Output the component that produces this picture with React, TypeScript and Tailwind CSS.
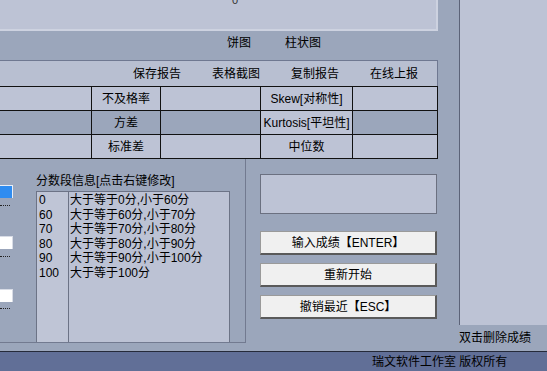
import React from 'react';

const font = { fontFamily: '"Liberation Sans", "Noto Sans CJK SC", sans-serif' };

const rows = [
  { cells: ['', '不及格率', '', 'Skew[对称性]', ''], dark: [false, false, false, false, false] },
  { cells: ['', '方差', '', 'Kurtosis[平坦性]', ''], dark: [true, true, true, false, true] },
  { cells: ['', '标准差', '', '中位数', ''], dark: [false, false, false, false, false] },
];

const ranges = [
  ['0', '大于等于0分,小于60分'],
  ['60', '大于等于60分,小于70分'],
  ['70', '大于等于70分,小于80分'],
  ['80', '大于等于80分,小于90分'],
  ['90', '大于等于90分,小于100分'],
  ['100', '大于等于100分'],
];

function Btn({ children }: { children: React.ReactNode }) {
  return (
    <button className="w-[177px] h-[24px] bg-[#f0f0f0] border border-[#9a9a9a] border-r-2 border-b-2 border-r-[#5a5a5a] border-b-[#5a5a5a] text-[12px] text-black flex items-center justify-center leading-none">
      {children}
    </button>
  );
}

export default function App() {
  return (
    <div
      className="w-[547px] h-[371px] flex flex-col bg-[#9ba6bb] overflow-hidden text-[12px] text-black"
      style={font}
    >
      <div className="flex h-[351px]">
        {/* left area */}
        <div className="w-[459px] flex flex-col">
          <div className="relative h-[31px] w-[438px] bg-[#bdc3d5] border-r-2 border-b-2 border-[#cdd2e0]">
            <span className="absolute left-[232px] top-[-6px] text-[11px] leading-[12px] text-[#333]">0</span>
          </div>

          <div className="h-[29px] w-[438px] flex pl-[227px] pt-[5px] leading-[14px]">
            <span>饼图</span>
            <span className="ml-[34px]">柱状图</span>
          </div>

          <div className="h-[26px] w-[438px] bg-[#b8bfd1] border-t border-r border-[#6f7891] flex items-center pl-[133px] gap-[31px] leading-[14px] whitespace-nowrap">
            <span className="shrink-0">保存报告</span>
            <span className="shrink-0">表格截图</span>
            <span className="shrink-0">复制报告</span>
            <span className="shrink-0">在线上报</span>
          </div>

          <div className="w-[438px] border-t border-[#111]">
            {rows.map((r, i) => (
              <div key={i} className="grid grid-cols-[92px_69px_100px_92px_85px] h-[24px]">
                {r.cells.map((c, j) => (
                  <div
                    key={j}
                    className={`border-r border-b border-[#111] flex items-center justify-center whitespace-nowrap ${
                      r.dark[j] ? 'bg-[#9ba6bb]' : 'bg-[#bdc3d5]'
                    }`}
                  >
                    {c}
                  </div>
                ))}
              </div>
            ))}
          </div>

          <div className="flex flex-1">
            {/* group box */}
            <div className="w-[246px] h-[184px] border-r border-b border-[#727a90] flex">
              <div className="w-[36px] flex flex-col">
                <div className="mt-[26px] w-[13px] h-[13px] bg-[#2f8cf0] border-t border-r border-[#e8eef8]" />
                <div className="mt-[7px] w-[10px] border-b border-dotted border-[#222]" />
                <div className="mt-[30px] w-[13px] h-[13px] bg-white border-t border-r border-[#d8dce6]" />
                <div className="mt-[7px] w-[10px] border-b border-dotted border-[#222]" />
                <div className="mt-[32px] w-[13px] h-[13px] bg-white border-t border-r border-[#d8dce6]" />
                <div className="mt-[6px] w-[10px] border-b border-dotted border-[#222]" />
              </div>
              <div className="flex flex-col">
                <div className="pt-[15px] h-[32px] leading-[14px] whitespace-nowrap">分数段信息[点击右键修改]</div>
                <div className="w-[194px] flex-1 border-t border-l border-r border-[#6c7386] bg-[#bcc2d4] flex">
                  <div className="w-[32px] border-r border-[#6c7386] bg-[#bfc5d6] pl-[2px] pt-[1px]">
                    {ranges.map(([n]) => (
                      <div key={n} className="h-[14.6px] leading-[14.6px]">
                        {n}
                      </div>
                    ))}
                  </div>
                  <div className="flex-1 pl-[1px] pt-[1px]">
                    {ranges.map(([n, t]) => (
                      <div key={n} className="h-[14.6px] leading-[14.6px] whitespace-nowrap">
                        {t}
                      </div>
                    ))}
                  </div>
                </div>
              </div>
            </div>

            {/* buttons */}
            <div className="pl-[14px] pt-[15px] flex flex-col">
              <div className="w-[177px] h-[40px] bg-[#bdc3d5] border border-[#6b7080]" />
              <div className="mt-[17px] flex flex-col gap-[8px]">
                <Btn>
                  输入成绩<span className="font-bold">【</span>ENTER<span className="font-bold">】</span>
                </Btn>
                <Btn>重新开始</Btn>
                <Btn>
                  撤销最近<span className="font-bold">【</span>ESC<span className="font-bold">】</span>
                </Btn>
              </div>
            </div>
          </div>
        </div>

        {/* right panel */}
        <div className="flex-1 flex flex-col">
          <div className="h-[325px] bg-[#bdc3d5] border-l border-[#5c6378]" />
          <div className="pt-[6px] leading-[14px] whitespace-nowrap">双击删除成绩</div>
        </div>
      </div>

      <div className="h-[20px] bg-[#616f97] border-t border-[#252a3a] flex items-center pl-[372px] leading-[14px]">
        瑞文软件工作室 版权所有
      </div>
    </div>
  );
}
